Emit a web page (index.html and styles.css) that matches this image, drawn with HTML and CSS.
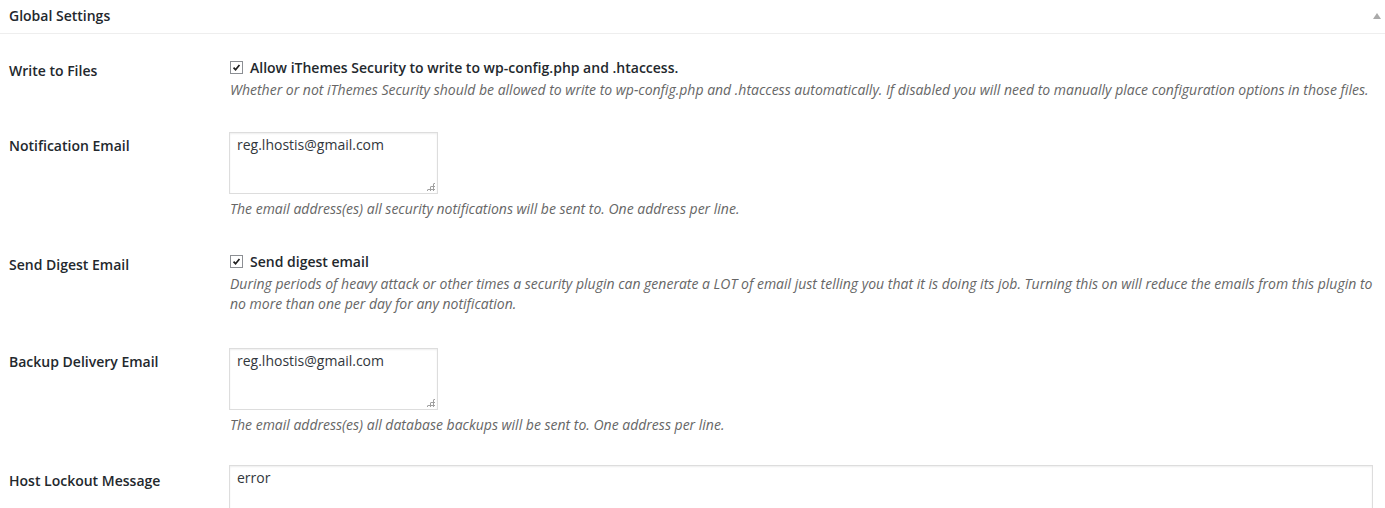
FILE: index.html
```html
<!DOCTYPE html>
<html>
  <head>
    <meta charset="utf-8" />
    <title>Global Settings</title>
    <link rel="stylesheet" href="styles.css">
  </head>
  <body>
    <div class="postbox">
      <div class="postbox-header">
        <h3 class="postbox-title">Global Settings</h3>
        <span class="toggle-arrow"></span>
      </div>

      <div class="settings">
        <!-- write to files -->
        <div class="row">
          <div class="label">Write to Files</div>
          <div class="field">
            <label class="check"><span class="box"><svg viewBox="0 0 13 13" width="13" height="13"><path d="M3 6.6 L5.4 9.2 L10 3.6" fill="none" stroke="#1e1e1e" stroke-width="2"/></svg></span>Allow iThemes Security to write to wp-config.php and .htaccess.</label>
            <p class="description">Whether or not iThemes Security should be allowed to write to wp-config.php and .htaccess automatically. If disabled you will need to manually place configuration options in those files.</p>
          </div>
        </div>

        <!-- notification email -->
        <div class="row">
          <div class="label">Notification Email</div>
          <div class="field">
            <div class="textarea-wrap">
              <textarea class="small-text" rows="3">reg.lhostis@gmail.com</textarea>
            </div>
            <p class="description desc-gap">The email address(es) all security notifications will be sent to. One address per line.</p>
          </div>
        </div>

        <!-- digest email -->
        <div class="row row-tall">
          <div class="label">Send Digest Email</div>
          <div class="field">
            <label class="check"><span class="box"><svg viewBox="0 0 13 13" width="13" height="13"><path d="M3 6.6 L5.4 9.2 L10 3.6" fill="none" stroke="#1e1e1e" stroke-width="2"/></svg></span>Send digest email</label>
            <p class="description">During periods of heavy attack or other times a security plugin can generate a LOT of email just telling you that it is doing its job. Turning this on will reduce the emails from this plugin to no more than one per day for any notification.</p>
          </div>
        </div>

        <!-- backup email -->
        <div class="row">
          <div class="label">Backup Delivery Email</div>
          <div class="field">
            <div class="textarea-wrap">
              <textarea class="small-text" rows="3">reg.lhostis@gmail.com</textarea>
            </div>
            <p class="description desc-gap">The email address(es) all database backups will be sent to. One address per line.</p>
          </div>
        </div>

        <!-- lockout message -->
        <div class="row row-last">
          <div class="label">Host Lockout Message</div>
          <div class="field">
            <textarea class="large-text" rows="4">error</textarea>
          </div>
        </div>
      </div>
    </div>
  </body>
</html>
```

FILE: styles.css
```css
html, body {
  margin: 0;
  padding: 0;
  background: #fff;
  overflow: hidden;
}

body {
  font-family: "Open Sans", "Liberation Sans", sans-serif;
  font-size: 14px;
  color: #23282d;
}

.postbox {
  background: #fff;
}

/* header bar */
.postbox-header {
  height: 32px;
  border-bottom: 1px solid #eeeeee;
  display: flex;
  align-items: center;
  justify-content: space-between;
  padding: 0 4px 1px 9px;
}

.postbox-title {
  margin: 0;
  font-size: 14px;
  font-weight: 600;
  line-height: 1.4;
}

.toggle-arrow {
  width: 0;
  height: 0;
  border-left: 4px solid transparent;
  border-right: 4px solid transparent;
  border-bottom: 6px solid #aaaaaa;
  margin-top: -1px;
}

/* table-like rows */
.settings {
  padding-top: 8px;
}

.row {
  display: flex;
  align-items: flex-start;
}

.label {
  flex: 0 0 220px;
  padding: 20px 0 0 9px;
  font-weight: 600;
  line-height: 18px;
}

.field {
  flex: 1 1 auto;
  padding: 15px 12px 17px 0;
}

.row-tall .field {
  padding-bottom: 19px;
}

.row-last .field {
  padding-top: 13px;
}

.check {
  display: flex;
  align-items: center;
  font-weight: 600;
  line-height: 21px;
  padding-left: 1px;
}

.box {
  width: 11px;
  height: 11px;
  border: 1px solid #8c8f94;
  background: #fff;
  margin-right: 7px;
  display: flex;
  align-items: center;
  justify-content: center;
}

.box svg {
  width: 11px;
  height: 11px;
}

.description {
  margin: 2px 0 0;
  padding-left: 1px;
  font-size: 14px;
  font-style: italic;
  line-height: 20px;
  color: #666666;
}

.desc-gap {
  margin-top: 5px;
}

textarea {
  font-family: "Open Sans", "Liberation Sans", sans-serif;
  font-size: 14px;
  color: #32373c;
  line-height: 20px;
  border: 1px solid #dddddd;
  box-shadow: inset 0 1px 2px rgba(0, 0, 0, 0.07);
  padding: 2px 7px;
  margin: 0;
  resize: none;
  box-sizing: border-box;
  display: block;
  outline: none;
}

.textarea-wrap {
  position: relative;
  width: 209px;
}

.small-text {
  width: 209px;
  height: 62px;
}

/* dotted resize grip */
.textarea-wrap::after {
  content: "";
  position: absolute;
  right: 3px;
  bottom: 3px;
  width: 9px;
  height: 9px;
  background:
    radial-gradient(circle, #a0a0a0 1px, transparent 1.2px) 0 0 / 3px 3px;
  clip-path: polygon(100% 0, 100% 100%, 0 100%);
}

.large-text {
  width: 100%;
  height: 90px;
}
```
